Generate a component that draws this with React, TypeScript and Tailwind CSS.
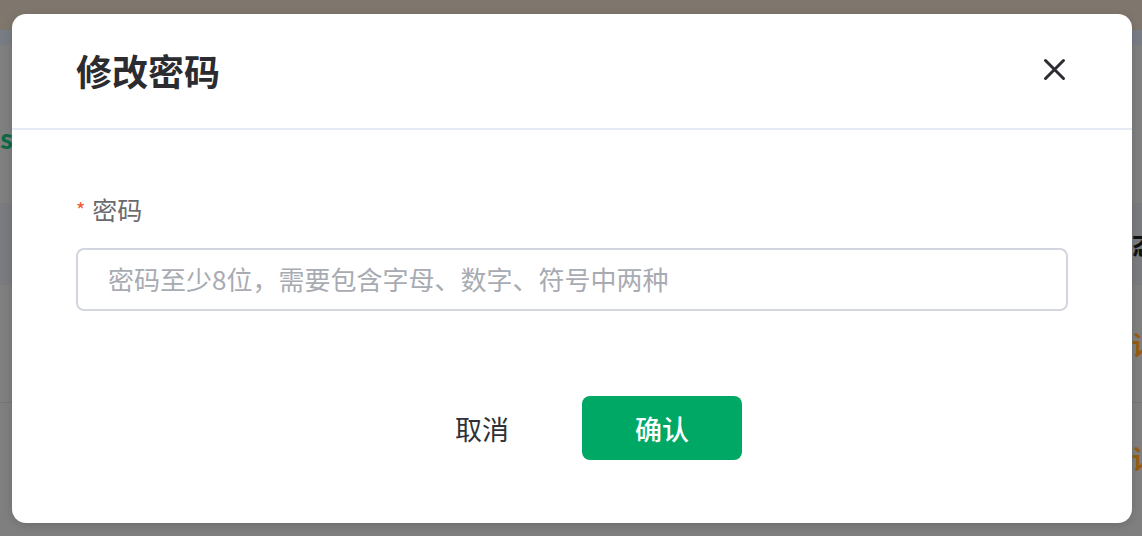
import React from "react";

const cjk = { fontFamily: '"Noto Sans CJK SC", "Noto Sans", sans-serif' };

function BgRow({ h, bg, left, right, rightColor, leftColor, border }: { h: number; bg: string; left?: string; right?: string; rightColor?: string; leftColor?: string; border?: boolean }) {
  return (
    <div className={`flex items-center justify-between ${border ? "border-b border-[#74767a]" : ""}`} style={{ height: h, background: bg }}>
      <div className="w-[12px] overflow-hidden whitespace-nowrap text-[26px] font-semibold leading-none" style={{ color: leftColor }}>
        {left}
      </div>
      <div className="w-[10px] overflow-hidden whitespace-nowrap text-[26px] font-bold leading-none" style={{ color: rightColor }}>
        {right}
      </div>
    </div>
  );
}

export default function App() {
  return (
    <div className="relative h-[536px] w-[1142px] overflow-hidden bg-[#7f7f7f]" style={cjk}>
      <div className="flex flex-col">
        <div className="h-[30px] bg-[#7f776d]" />
        <div className="h-[15px] bg-[#787c84]" />
        <div className="flex h-[158px] flex-col bg-[#7f7f80]">
          <div className="h-[73px]" />
          <BgRow h={40} bg="#7f7f80" left="s" leftColor="#0e6a46" />
        </div>
        <BgRow h={82} bg="#7a7b7e" right="态" rightColor="#111111" />
        <BgRow h={118} bg="#7f7f80" right="详" rightColor="#9a5a10" border />
        <BgRow h={110} bg="#7f7f80" right="详" rightColor="#9a5a10" />
        <div className="h-[33px] bg-[#7f7f80]" />
      </div>

      <div className="absolute left-[12px] top-[14px] flex w-[1120px] flex-col rounded-[14px] bg-white shadow-[0_2px_10px_rgba(0,0,0,0.15)]">
        <div className="flex h-[116px] items-center justify-between border-b-2 border-[#e6ebf5] pl-[64px] pr-[66px]">
          <div className="-mt-[3px] text-[36px] font-semibold leading-none text-[#2c2c30]">修改密码</div>
          <svg width="23" height="23" viewBox="0 0 23 23" className="-mt-[3px]">
            <path d="M2.5 2.5 L20.5 20.5 M20.5 2.5 L2.5 20.5" stroke="#2b2d33" strokeWidth="3" strokeLinecap="round" />
          </svg>
        </div>

        <div className="flex flex-col px-[64px] pt-[61px]">
          <div className="flex h-[36px] items-center">
            <span className="mr-[7px] mt-[2px] text-[20px] leading-none text-[#f5582d]">*</span>
            <span className="text-[25px] leading-none text-[#6a6a6e]">密码</span>
          </div>
          <div className="mt-[21px] flex h-[63px] items-center rounded-[8px] border-2 border-[#d3d6de] pl-[30px]">
            <span className="-mt-[2px] text-[26px] leading-none text-[#a8abb2]">密码至少8位，需要包含字母、数字、符号中两种</span>
          </div>
        </div>

        <div className="mb-[63px] mt-[85px] flex items-center justify-center gap-[21px]">
          <div className="flex h-[64px] w-[160px] items-center justify-center text-[27px] leading-none text-[#303136]">取消</div>
          <div className="-ml-[1px] flex h-[64px] w-[160px] items-center justify-center rounded-[8px] bg-[#00a866] text-[27px] font-medium leading-none text-white">确认</div>
        </div>
      </div>
    </div>
  );
}
